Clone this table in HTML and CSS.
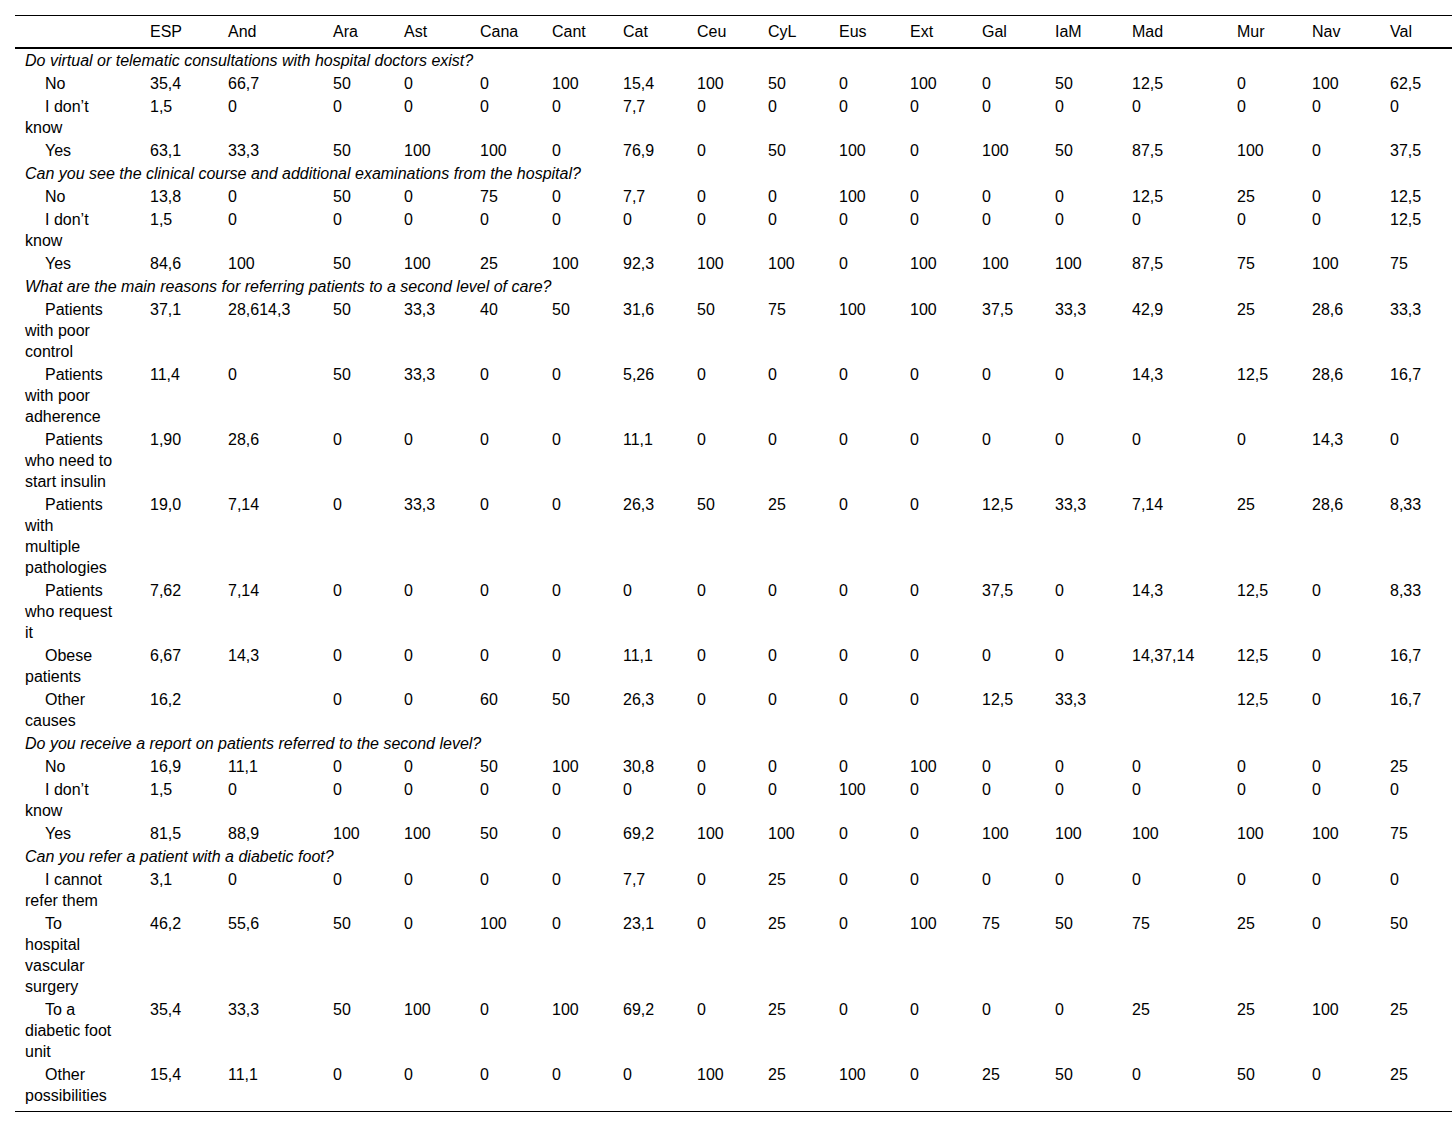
FILE: index.html
```html
<!DOCTYPE html>
<html lang="en">
<head>
<meta charset="utf-8">
<title>Table</title>
<link rel="stylesheet" href="styles.css">
</head>
<body>
<table class="data">
<colgroup>
<col class="c-label"><col class="c-esp"><col class="c-and"><col class="c-ara"><col class="c-ast"><col class="c-cana"><col class="c-cant"><col class="c-cat"><col class="c-ceu"><col class="c-cyl"><col class="c-eus"><col class="c-ext"><col class="c-gal"><col class="c-iam"><col class="c-mad"><col class="c-mur"><col class="c-nav"><col class="c-val">
</colgroup>
<thead>
<tr><th></th><th>ESP</th><th>And</th><th>Ara</th><th>Ast</th><th>Cana</th><th>Cant</th><th>Cat</th><th>Ceu</th><th>CyL</th><th>Eus</th><th>Ext</th><th>Gal</th><th>IaM</th><th>Mad</th><th>Mur</th><th>Nav</th><th>Val</th></tr>
</thead>
<tbody>
<tr class="q"><td colspan="18">Do virtual or telematic consultations with hospital doctors exist?</td></tr>
<tr><td class="lbl">No</td><td>35,4</td><td>66,7</td><td>50</td><td>0</td><td>0</td><td>100</td><td>15,4</td><td>100</td><td>50</td><td>0</td><td>100</td><td>0</td><td>50</td><td>12,5</td><td>0</td><td>100</td><td>62,5</td></tr>
<tr><td class="lbl">I don’t<br>know</td><td>1,5</td><td>0</td><td>0</td><td>0</td><td>0</td><td>0</td><td>7,7</td><td>0</td><td>0</td><td>0</td><td>0</td><td>0</td><td>0</td><td>0</td><td>0</td><td>0</td><td>0</td></tr>
<tr><td class="lbl">Yes</td><td>63,1</td><td>33,3</td><td>50</td><td>100</td><td>100</td><td>0</td><td>76,9</td><td>0</td><td>50</td><td>100</td><td>0</td><td>100</td><td>50</td><td>87,5</td><td>100</td><td>0</td><td>37,5</td></tr>
<tr class="q"><td colspan="18">Can you see the clinical course and additional examinations from the hospital?</td></tr>
<tr><td class="lbl">No</td><td>13,8</td><td>0</td><td>50</td><td>0</td><td>75</td><td>0</td><td>7,7</td><td>0</td><td>0</td><td>100</td><td>0</td><td>0</td><td>0</td><td>12,5</td><td>25</td><td>0</td><td>12,5</td></tr>
<tr><td class="lbl">I don’t<br>know</td><td>1,5</td><td>0</td><td>0</td><td>0</td><td>0</td><td>0</td><td>0</td><td>0</td><td>0</td><td>0</td><td>0</td><td>0</td><td>0</td><td>0</td><td>0</td><td>0</td><td>12,5</td></tr>
<tr><td class="lbl">Yes</td><td>84,6</td><td>100</td><td>50</td><td>100</td><td>25</td><td>100</td><td>92,3</td><td>100</td><td>100</td><td>0</td><td>100</td><td>100</td><td>100</td><td>87,5</td><td>75</td><td>100</td><td>75</td></tr>
<tr class="q"><td colspan="18">What are the main reasons for referring patients to a second level of care?</td></tr>
<tr><td class="lbl">Patients<br>with poor<br>control</td><td>37,1</td><td>28,614,3</td><td>50</td><td>33,3</td><td>40</td><td>50</td><td>31,6</td><td>50</td><td>75</td><td>100</td><td>100</td><td>37,5</td><td>33,3</td><td>42,9</td><td>25</td><td>28,6</td><td>33,3</td></tr>
<tr><td class="lbl">Patients<br>with poor<br>adherence</td><td>11,4</td><td>0</td><td>50</td><td>33,3</td><td>0</td><td>0</td><td>5,26</td><td>0</td><td>0</td><td>0</td><td>0</td><td>0</td><td>0</td><td>14,3</td><td>12,5</td><td>28,6</td><td>16,7</td></tr>
<tr><td class="lbl">Patients<br>who need to<br>start insulin</td><td>1,90</td><td>28,6</td><td>0</td><td>0</td><td>0</td><td>0</td><td>11,1</td><td>0</td><td>0</td><td>0</td><td>0</td><td>0</td><td>0</td><td>0</td><td>0</td><td>14,3</td><td>0</td></tr>
<tr><td class="lbl">Patients<br>with<br>multiple<br>pathologies</td><td>19,0</td><td>7,14</td><td>0</td><td>33,3</td><td>0</td><td>0</td><td>26,3</td><td>50</td><td>25</td><td>0</td><td>0</td><td>12,5</td><td>33,3</td><td>7,14</td><td>25</td><td>28,6</td><td>8,33</td></tr>
<tr><td class="lbl">Patients<br>who request<br>it</td><td>7,62</td><td>7,14</td><td>0</td><td>0</td><td>0</td><td>0</td><td>0</td><td>0</td><td>0</td><td>0</td><td>0</td><td>37,5</td><td>0</td><td>14,3</td><td>12,5</td><td>0</td><td>8,33</td></tr>
<tr><td class="lbl">Obese<br>patients</td><td>6,67</td><td>14,3</td><td>0</td><td>0</td><td>0</td><td>0</td><td>11,1</td><td>0</td><td>0</td><td>0</td><td>0</td><td>0</td><td>0</td><td>14,37,14</td><td>12,5</td><td>0</td><td>16,7</td></tr>
<tr><td class="lbl">Other<br>causes</td><td>16,2</td><td></td><td>0</td><td>0</td><td>60</td><td>50</td><td>26,3</td><td>0</td><td>0</td><td>0</td><td>0</td><td>12,5</td><td>33,3</td><td></td><td>12,5</td><td>0</td><td>16,7</td></tr>
<tr class="q"><td colspan="18">Do you receive a report on patients referred to the second level?</td></tr>
<tr><td class="lbl">No</td><td>16,9</td><td>11,1</td><td>0</td><td>0</td><td>50</td><td>100</td><td>30,8</td><td>0</td><td>0</td><td>0</td><td>100</td><td>0</td><td>0</td><td>0</td><td>0</td><td>0</td><td>25</td></tr>
<tr><td class="lbl">I don’t<br>know</td><td>1,5</td><td>0</td><td>0</td><td>0</td><td>0</td><td>0</td><td>0</td><td>0</td><td>0</td><td>100</td><td>0</td><td>0</td><td>0</td><td>0</td><td>0</td><td>0</td><td>0</td></tr>
<tr><td class="lbl">Yes</td><td>81,5</td><td>88,9</td><td>100</td><td>100</td><td>50</td><td>0</td><td>69,2</td><td>100</td><td>100</td><td>0</td><td>0</td><td>100</td><td>100</td><td>100</td><td>100</td><td>100</td><td>75</td></tr>
<tr class="q"><td colspan="18">Can you refer a patient with a diabetic foot?</td></tr>
<tr><td class="lbl">I cannot<br>refer them</td><td>3,1</td><td>0</td><td>0</td><td>0</td><td>0</td><td>0</td><td>7,7</td><td>0</td><td>25</td><td>0</td><td>0</td><td>0</td><td>0</td><td>0</td><td>0</td><td>0</td><td>0</td></tr>
<tr><td class="lbl">To<br>hospital<br>vascular<br>surgery</td><td>46,2</td><td>55,6</td><td>50</td><td>0</td><td>100</td><td>0</td><td>23,1</td><td>0</td><td>25</td><td>0</td><td>100</td><td>75</td><td>50</td><td>75</td><td>25</td><td>0</td><td>50</td></tr>
<tr><td class="lbl">To a<br>diabetic foot<br>unit</td><td>35,4</td><td>33,3</td><td>50</td><td>100</td><td>0</td><td>100</td><td>69,2</td><td>0</td><td>25</td><td>0</td><td>0</td><td>0</td><td>0</td><td>25</td><td>25</td><td>100</td><td>25</td></tr>
<tr class="last"><td class="lbl">Other<br>possibilities</td><td>15,4</td><td>11,1</td><td>0</td><td>0</td><td>0</td><td>0</td><td>0</td><td>100</td><td>25</td><td>100</td><td>0</td><td>25</td><td>50</td><td>0</td><td>50</td><td>0</td><td>25</td></tr>
</tbody>
</table>
</body>
</html>
```

FILE: styles.css
```css
html, body {
  margin: 0;
  padding: 0;
  background: #fff;
}

body {
  padding: 15px 0 0 15px;
  font-family: "Liberation Sans", Arial, sans-serif;
  font-size: 16px;
  color: #000;
}

.data {
  width: 1437px;
  table-layout: fixed;
  border-collapse: collapse;
  border-top: 1px solid #000;
  border-bottom: 1px solid #000;
}

.data th,
.data td {
  padding: 1px 0 1px 10px;
  line-height: 21px;
  text-align: left;
  vertical-align: top;
  font-weight: normal;
  white-space: nowrap;
}

.data thead th {
  padding-top: 5px;
  padding-bottom: 5px;
  border-bottom: 2px solid #000;
}

.data .q td {
  font-style: italic;
}

.data .lbl {
  text-indent: 20px;
}

.data .last td {
  padding-bottom: 5px;
}

.c-label { width: 125px; }
.c-esp { width: 78px; }
.c-and { width: 105px; }
.c-ara { width: 71px; }
.c-ast { width: 76px; }
.c-cana { width: 72px; }
.c-cant { width: 71px; }
.c-cat { width: 74px; }
.c-ceu { width: 71px; }
.c-cyl { width: 71px; }
.c-eus { width: 71px; }
.c-ext { width: 72px; }
.c-gal { width: 73px; }
.c-iam { width: 77px; }
.c-mad { width: 105px; }
.c-mur { width: 75px; }
.c-nav { width: 78px; }
.c-val { width: 72px; }
```
